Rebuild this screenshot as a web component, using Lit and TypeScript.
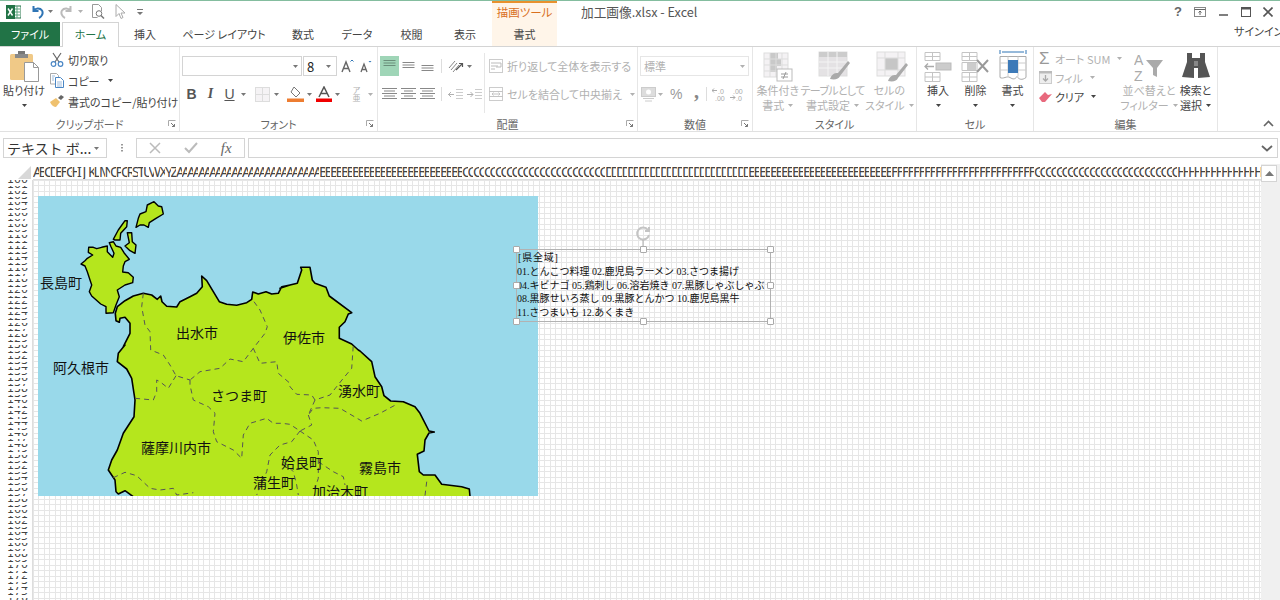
import { LitElement, html, css, svg } from 'lit';
import { customElement } from 'lit/decorators.js';

// map outlines were traced from crops, each crop has its own origin at 1/3 scale
const z = (ox: number, oy: number, pts: number[]) => {
  const out: string[] = [];
  for (let i = 0; i < pts.length; i += 2) {
    out.push(`${(ox + pts[i] / 3).toFixed(1)},${(oy + pts[i + 1] / 3).toFixed(1)}`);
  }
  return out;
};
const A = (p: number[]) => z(30, 190, p);
const B = (p: number[]) => z(280, 190, p);
const C = (p: number[]) => z(30, 345, p);
const D = (p: number[]) => z(280, 345, p);
const d = (...parts: string[][]) => 'M' + parts.flat().join(' L');

const mainland = d(
  A([258,392,256,370,262,350,285,332,310,318,340,310,365,315,382,328,392,318,396,335,410,349,440,351,450,335,480,320,500,310,517,290,515,258,530,272,550,305,568,335,590,343,620,346,650,338,665,328,668,306,685,312,708,305,725,312,745,310,755,290,780,285]),
  B([0,295,30,285,52,280,65,240,62,232,90,232,97,270,105,280,138,292,148,318,215,368,205,372,195,395,178,412,178,445,215,462,235,480]),
  D([240,18,275,50,285,95,305,125,312,152,332,168,370,170,405,185,420,205,447,258,463,261,447,264,435,285,432,318,412,328,418,380,430,390,465,390,485,418,545,425,568,432,570,453,570,480]),
  C([320,480,310,455,285,437,265,447,258,440,255,405,235,375,245,345,262,315,280,265,312,215,315,165,305,100,290,72,262,50,265,25,285,0]),
  A([280,470,300,430,300,400,285,382,270,385,268,397,258,392]),
) + ' Z';

const islands = [
  A([153,222,165,212,172,205,188,195,175,187,176,172,190,172,200,176,215,172,232,168,232,185,248,202,252,190,243,170,238,158,250,155,258,168,272,172,282,188,298,208,285,215,280,228,278,246,295,248,310,262,308,278,285,285,262,300,268,320,258,345,250,368,228,370,228,350,212,342,185,318,178,305,185,285,180,270,172,245,165,228]),
  A([250,148,265,120,285,92,292,92,290,110,272,130,270,150,255,150]),
  A([292,128,305,128,307,155,318,165,315,190,300,182,285,168,298,158]),
  A([318,112,325,85,330,72,348,65,352,45,372,35,385,48,395,50,400,72,378,85,358,98,355,112,342,105,330,105]),
].map((p) => d(p) + ' Z');

const borders = [
  d(A([340,310,335,350,345,405,360,425,362,480]), C([400,30,420,60,438,92,480,105])),
  d(C([438,92,415,130,390,110,380,105,380,140,370,165,315,160])),
  d(A([672,335,690,360,712,410,705,430,670,475]), C([640,50,600,42,570,70,510,80,480,105])),
  d(C([670,10,690,55,740,50,745,85,780,115]), D([30,125,50,148,95,150,105,165,150,150,190,100,215,70,220,0])),
  d(D([105,165,85,210,100,190,125,188,180,190,245,228,300,205,350,178])),
  d(D([85,210,95,240,60,258,30,238,5,235]), C([730,235,710,220,660,235,640,270,635,340,610,315,560,290,550,260,555,205,535,185,490,165,480,120,480,105])),
  d(D([60,258,100,285,115,320,115,400,105,430])),
  d(D([60,258,35,290,0,300]), C([720,330,710,380,680,450])),
  d(D([115,350,160,380,190,395,195,420])),
  d(D([10,350,40,380,50,420,55,450])),
  d(D([440,410,435,452])),
  d(C([250,398,285,382,320,392,360,430,390,435,430,430,440,450,490,443])),
];

const places: [string, number, number][] = [
  ['長島町', 40, 288], ['阿久根市', 53, 373], ['出水市', 176, 338], ['伊佐市', 283, 343],
  ['さつま町', 211, 401], ['湧水町', 338, 396], ['薩摩川内市', 141, 453], ['姶良町', 281, 468],
  ['霧島市', 359, 473], ['蒲生町', 253, 488], ['加治木町', 312, 497],
];

const letters = 'ABCDEFGHIJKLMNOPQRSTUVWXYZ';
const colName = (i: number) => (i < 26 ? letters[i] : letters[Math.floor(i / 26) - 1] + letters[i % 26]);

const caret = html`<svg width="5" height="3" viewBox="0 0 5 3"><path d="M0 0h5L2.5 3z" fill="currentColor"/></svg>`;

const lines = (y: number, ws: number[], c = '#777') => svg`${ws.map((w, i) => svg`<rect x="${(15 - w) / 2}" y="${y + i * 2.5}" width="${w}" height="1" fill="${c}"/>`)}`;
const align = (y: number, ws: number[], c = '#888') => html`<svg width="15" height="14" viewBox="0 0 15 14">${lines(y, ws, c)}</svg>`;

@customElement('app-root')
export class AppRoot extends LitElement {
  static styles = css`
    :host {
      display: block;
      width: 1280px;
      height: 600px;
      overflow: hidden;
      background: #fff;
      color: #444;
      font-family: 'Noto Sans CJK JP', 'Noto Sans', sans-serif;
      font-size: 11px;
      font-feature-settings: 'palt';
    }
    * { box-sizing: border-box; }
    svg { display: block; flex: none; }

    .app { display: flex; flex-direction: column; height: 600px; border-top: 1px solid #84bd9f; }

    .titlebar { display: flex; height: 21px; }
    .qat { width: 492px; display: flex; align-items: center; padding-left: 6px; color: #777; }
    .qat .gap { margin-left: 4px; }
    .undo { margin-left: 9px; }
    .redo { margin-left: 7px; }
    .preview { margin-left: 8px; }
    .pointer { margin-left: 10px; }
    .customize { margin-left: 11px; }
    .context-label {
      width: 65px;
      background: #fff5e9;
      border-top: 2px solid #e8912d;
      color: #d9701e;
      font-size: 11.5px;
      line-height: 19px;
      text-align: center;
    }
    .doc-title { margin-left: 24px; font-size: 12.7px; line-height: 22px; color: #555; font-feature-settings: normal; }
    .win { margin-left: auto; display: flex; align-items: center; padding-right: 1px; }
    .win .b { width: 22px; display: flex; justify-content: center; }
    .win .pin { margin-right: 2px; }
    .help { font: 700 13px 'Liberation Sans', sans-serif; color: #666; }

    .tabs { display: flex; height: 24px; position: relative; z-index: 1; }
    .tab { text-align: center; line-height: 24px; color: #444; }
    .tab.file { width: 60px; background: #217346; color: #fff; margin-right: 2px; }
    .tab.home { width: 57px; height: 25px; background: #fff; color: #217346; border: 1px solid #d4d4d4; border-bottom: none; line-height: 22px; }
    .tab.w52 { width: 52px; }
    .tab.w54 { width: 54px; }
    .tab.w56 { width: 56px; }
    .tab.w53 { width: 53px; }
    .tab.w106 { width: 106px; }
    .tab.ctx { width: 65px; background: #fff5e9; }
    .signin { margin-left: auto; line-height: 18px; white-space: nowrap; width: 46px; overflow: hidden; }

    .ribbon { display: flex; height: 86px; border-top: 1px solid #d4d4d4; border-bottom: 1px solid #e1e1e1; }
    .group { display: flex; flex-direction: column; border-right: 1px solid #e6e6e6; height: 84px; }
    .body { height: 66px; display: flex; }
    .label { display: grid; grid-template-columns: 1fr auto 1fr; align-items: center; height: 18px; padding-top: 3px; color: #666; }
    .launcher { grid-column: 3; justify-self: end; margin-right: 3px; }
    .label span { grid-column: 2; white-space: nowrap; }
    .g1 { width: 180px; }
    .g2 { width: 198px; }
    .g3 { width: 260px; }
    .g4 { width: 115px; }
    .g5 { width: 164px; }
    .g6 { width: 117px; }
    .g7 { width: 184px; }
    .collapse { flex: 1; display: flex; justify-content: flex-end; align-items: flex-end; padding: 0 6px 4px 0; }

    .big { display: flex; flex-direction: column; align-items: center; padding-top: 3px; white-space: nowrap; line-height: 15px; }
    .big .ico { height: 33px; display: flex; align-items: center; justify-content: center; }
    .big .car { height: 15px; display: flex; align-items: center; gap: 4px; }
    .w48 { width: 48px; }
    .w50 { width: 50px; }
    .w60 { width: 60px; }
    .w54b { width: 54px; }
    .w38 { width: 38px; }
    .w37 { width: 37px; }
    .w44 { width: 44px; }
    .off { color: #b1b1b1; }
    .squeeze { letter-spacing: -0.7px; }
    .nudge4 { margin-left: 6px; }
    .nudge3 { margin-left: 3px; }
    .cells-body { padding-left: 2px; }
    .edit-body { padding-left: 5px; }

    .stack { display: flex; flex-direction: column; padding: 2px 0 0 2px; }
    .item { display: flex; align-items: center; gap: 4px; height: 21px; white-space: nowrap; }
    .stack.tight { padding: 2px 0 0 0; width: 87px; }
    .stack.tight .item { height: 19px; gap: 3px; }
    .item .car { margin-left: 4px; display: flex; }
    .item.on { color: #444; }
    .sigma { font: 17px/17px 'Liberation Sans', sans-serif; color: #999; width: 13px; }

    .rows { display: flex; flex-direction: column; gap: 8px; padding-top: 9px; }
    .row { display: flex; align-items: center; height: 20px; }
    .row.txt { gap: 4px; white-space: nowrap; }
    .c { width: 19px; height: 20px; display: flex; align-items: center; justify-content: center; }
    .c.w17 { width: 17px; }
    .k { width: 9px; display: flex; justify-content: center; color: #777; }
    .k.off { color: #b1b1b1; }
    .ml5 { margin-left: 5px; }
    .ml4 { margin-left: 4px; }
    .ml2 { margin-left: 2px; }
    .pl2 { padding-left: 2px; }
    .pl3 { padding-left: 3px; }
    .sep { width: 1px; height: 14px; background: #ddd; }
    .vsep { width: 1px; height: 60px; background: #e6e6e6; margin: 6px 4px 0 0; }
    .active { background: #9fd5b7; }
    .bold { font: 700 14px 'Liberation Sans', sans-serif; color: #555; }
    .ital { font: italic 700 14px 'Liberation Serif', serif; color: #555; }
    .under { font: 400 14px 'Liberation Sans', sans-serif; color: #555; text-decoration: underline; }
    .phonetic { display: block; font-size: 8px; line-height: 8px; text-align: center; padding-top: 2px; }
    .pct { margin-left: 5px; font: 14px 'Liberation Sans', sans-serif; width: 18px; color: #999; }
    .comma { margin-left: 6px; font: 700 20px/10px 'Liberation Serif', serif; width: 10px; height: 16px; color: #888; }
    .caret-gap { display: flex; margin-left: 4px; }

    .field { height: 20px; border: 1px solid #d4d4d4; background: #fff; display: flex; align-items: center; justify-content: space-between; padding: 0 3px; color: #777; }
    .fontname { width: 120px; justify-content: flex-end; }
    .fontsize { width: 34px; margin-left: 1px; color: #222; font-size: 13px; }
    .numfmt { width: 109px; margin-left: 2px; border-color: #e6e6e6; color: #b1b1b1; }

    .fbar { display: flex; align-items: center; height: 20px; margin-top: 6px; padding-left: 3px; }
    .namebox { width: 104px; height: 20px; border: 1px solid #d4d4d4; display: flex; align-items: center; justify-content: space-between; padding: 0 7px 0 3px; font-size: 14px; color: #333; white-space: nowrap; font-feature-settings: normal; }
    .namebox .car { color: #777; display: flex; }
    .dots { width: 29px; display: flex; justify-content: center; }
    .fxbox { width: 109px; height: 20px; border: 1px solid #d4d4d4; display: flex; align-items: center; }
    .fxbox .c3 { width: 36px; display: flex; justify-content: center; }
    .fx { font: italic 15px 'Liberation Serif', serif; color: #666; }
    .finput { margin-left: 3px; width: 1030px; height: 20px; border: 1px solid #d4d4d4; display: flex; align-items: center; justify-content: flex-end; padding-right: 4px; }

    .sheet { flex: 1; min-height: 0; margin-top: 6px; display: grid; grid-template-columns: 33px 1228px 19px; grid-template-rows: 16px 1fr; }
    .corner { display: flex; justify-content: flex-end; align-items: flex-end; padding: 0 2px 1px 0; }
    .colhead { display: flex; overflow: hidden; border-bottom: 1px solid #ddd; }
    .colhead div { flex: none; width: 5.5px; height: 15px; overflow: hidden; font: 14px/15px 'Noto Sans', sans-serif; font-feature-settings: normal; color: #444; white-space: nowrap; }
    .rowhead { overflow: hidden; border-right: 1px solid #ddd; }
    .rowhead div { height: 5.5px; overflow: hidden; display: flex; align-items: flex-end; justify-content: flex-end; padding-right: 4px; font: 11px/12px 'DejaVu Sans', sans-serif; font-feature-settings: normal; color: #444; }
    .grid {
      position: relative;
      overflow: hidden;
      background-image:
        linear-gradient(to right, #e6e6e6 1px, transparent 1px, transparent 5px, #e6e6e6 5px, #e6e6e6 6px, transparent 6px),
        linear-gradient(to bottom, #e6e6e6 1px, transparent 1px, transparent 5px, #e6e6e6 5px, #e6e6e6 6px, transparent 6px);
      background-size: 11px 11px;
    }
    .scroll { grid-row: 1 / 3; grid-column: 3; background: #f0f0f0; padding: 1px 3px 0 0; }
    .scroll .up { height: 17px; background: #fff; border: 1px solid #d4d4d4; display: flex; align-items: center; justify-content: center; }

    .map { position: absolute; left: 5px; top: 16px; }
    .map text { font: 14px 'Noto Sans CJK JP', sans-serif; fill: #111; }

    .textbox {
      position: absolute;
      left: 483px;
      top: 69px;
      width: 255px;
      height: 73px;
      border: 1px solid #b2b2b2;
      padding-top: 1px;
      font: 10px/13.8px 'Liberation Serif', 'Noto Sans CJK JP', serif;
      font-feature-settings: normal;
      color: #111;
      white-space: nowrap;
    }
    .hd { letter-spacing: 0.8px; padding-left: 1px; }
    .h { position: absolute; width: 7px; height: 7px; background: #fff; border: 1px solid #aaa; border-radius: 1px; }
    .tl { left: -4px; top: -4px; } .tc { left: 123px; top: -4px; } .tr { right: -4px; top: -4px; }
    .ml { left: -4px; top: 32px; } .mr { right: -4px; top: 32px; }
    .bl { left: -4px; bottom: -4px; } .bc { left: 123px; bottom: -4px; } .br { right: -4px; bottom: -4px; }
    .rot { position: absolute; left: 118px; top: -24px; }
  `;

  launcher() {
    return html`<svg class="launcher" width="8" height="8" viewBox="0 0 8 8"><path d="M.5 6V.5H7.5" fill="none" stroke="#aaa"/><path d="M3 3l3.5 3.5M6.5 4v2.5H4" fill="none" stroke="#777"/></svg>`;
  }

  titleBar() {
    return html`<div class="titlebar">
      <div class="qat">
        <svg width="15" height="14" viewBox="0 0 15 14"><rect x="7" y="1" width="8" height="12" fill="#fff" stroke="#217346"/><path d="M8 4h6M8 7h6M8 10h6M11 1v12" stroke="#5aa47e"/><rect y="0" width="9" height="14" fill="#217346"/><path d="M2 3.5l4.5 7M6.5 3.5l-4.5 7" stroke="#fff" stroke-width="1.4"/></svg>
        <svg class="undo" width="14" height="14" viewBox="0 0 14 14"><path d="M3.500 1v5H8.500M3.500 6C5 3 10 2.500 12 5.500C13.500 8 12 11.500 9 13" fill="none" stroke="#2f75b5" stroke-width="2"/></svg>
        <span class="gap">${caret}</span>
        <svg class="redo" width="14" height="14" viewBox="0 0 14 14"><path d="M10.500 1v5H5.500M10.500 6C9 3 4 2.500 2 5.500C.5 8 2 11.500 5 13" fill="none" stroke="#bbb" stroke-width="2"/></svg>
        <span class="gap off">${caret}</span>
        <svg class="preview" width="14" height="15" viewBox="0 0 14 15"><path d="M1.500.5h6l3 3V7M1.500.5v13h5" fill="none" stroke="#999"/><circle cx="8" cy="9.500" r="2.800" fill="none" stroke="#777"/><path d="M10 11.500l3 3" stroke="#777" stroke-width="1.500"/></svg>
        <svg class="pointer" width="11" height="15" viewBox="0 0 11 15"><path d="M1 .5v12l3-3 2 5 2-1-2-4.500h4z" fill="#fff" stroke="#aaa"/></svg>
        <svg class="customize" width="6" height="6" viewBox="0 0 6 6"><path d="M0 0h6v1H0zM0 3h6L3 6z" fill="#777"/></svg>
      </div>
      <div class="context-label">描画ツール</div>
      <div class="doc-title">加工画像.xlsx - Excel</div>
      <div class="win">
        <div class="b"><span class="help">?</span></div>
        <div class="b pin"><svg width="12" height="10" viewBox="0 0 12 10"><rect x=".5" y=".5" width="11" height="9" fill="none" stroke="#888"/><path d="M.5 2.500h11M6 8V4M4.500 5.500L6 4l1.500 1.500" fill="none" stroke="#666"/></svg></div>
        <div class="b"><svg width="10" height="10" viewBox="0 0 10 10"><path d="M0 8h9" stroke="#555" stroke-width="1.500"/></svg></div>
        <div class="b"><svg width="10" height="10" viewBox="0 0 10 10"><rect x=".5" y=".5" width="9" height="9" fill="none" stroke="#555"/><path d="M0 1.500h10" stroke="#555" stroke-width="2"/></svg></div>
        <div class="b"><svg width="10" height="10" viewBox="0 0 10 10"><path d="M.5.5l9 9M9.500.5l-9 9" stroke="#555" stroke-width="1.600"/></svg></div>
      </div>
    </div>`;
  }

  tabs() {
    return html`<div class="tabs">
      <div class="tab file">ファイル</div>
      <div class="tab home">ホーム</div>
      <div class="tab w52">挿入</div>
      <div class="tab w106">ページ レイアウト</div>
      <div class="tab w52">数式</div>
      <div class="tab w56">データ</div>
      <div class="tab w53">校閲</div>
      <div class="tab w54">表示</div>
      <div class="tab ctx">書式</div>
      <div class="signin">サインイン</div>
    </div>`;
  }

  clipboard() {
    return html`<div class="group g1">
      <div class="body">
        <div class="big w48">
          <div class="ico"><svg width="30" height="33" viewBox="0 0 30 33"><rect x="1" y="4" width="23" height="26" rx="1.500" fill="#f0c987"/><rect x="9" y="1" width="7" height="5" fill="#777"/><rect x="6" y="4" width="13" height="4" fill="#8a8a8a"/><path d="M15.500 12.500h9l5 5v14h-14z" fill="#fff" stroke="#999"/><path d="M24.500 12.500v5h5" fill="none" stroke="#999"/></svg></div>
          <span>貼り付け</span>
          <div class="car">${caret}</div>
        </div>
        <div class="stack">
          <div class="item">
            <svg width="14" height="15" viewBox="0 0 14 15"><path d="M3 1l6 9M11 1L5 10" stroke="#666" stroke-width="1.200"/><circle cx="3.500" cy="12" r="2.300" fill="#fff" stroke="#4a86c5" stroke-width="1.200"/><circle cx="10.500" cy="12" r="2.300" fill="#fff" stroke="#4a86c5" stroke-width="1.200"/></svg>
            <span>切り取り</span>
          </div>
          <div class="item">
            <svg width="14" height="15" viewBox="0 0 14 15"><path d="M.5.5h6l2 2V11H.5z" fill="#fff" stroke="#aaa"/><path d="M5.500 4.500h5l3 3v7h-8z" fill="#fff" stroke="#4a86c5"/><path d="M7 9h5M7 11h5M7 13h5M2 3h3M2 5h2M2 7h2" stroke="#9dbbdc"/></svg>
            <span>コピー</span><span class="car">${caret}</span>
          </div>
          <div class="item">
            <svg width="14" height="13" viewBox="0 0 14 13"><path d="M0 7l6-4 4 4-4 5c-2 0-5-2-6-5z" fill="#efc16f"/><path d="M8 3l3-3 3 2-3 3z" fill="#666"/></svg>
            <span>書式のコピー/貼り付け</span>
          </div>
        </div>
      </div>
      <div class="label"><span>クリップボード</span>${this.launcher()}</div>
    </div>`;
  }

  font() {
    return html`<div class="group g2">
      <div class="body">
        <div class="rows pl2">
          <div class="row">
            <div class="field fontname">${caret}</div>
            <div class="field fontsize"><span>8</span><span class="k">${caret}</span></div>
            <div class="c w17 ml2"><svg width="13" height="14" viewBox="0 0 13 14"><path d="M1 13L5 3l4 10M2.500 9.500h5" fill="none" stroke="#666" stroke-width="1.400"/><path d="M9.500 2.500L11 1l1.500 1.500" fill="none" stroke="#2f75b5"/></svg></div>
            <div class="c"><svg width="13" height="14" viewBox="0 0 13 14"><path d="M2 13L5 5l3 8M3 10.500h4" fill="none" stroke="#666" stroke-width="1.300"/><path d="M9.500 2h3l-1.500 1.500z" fill="#2f75b5"/></svg></div>
          </div>
          <div class="row">
            <div class="c bold">B</div>
            <div class="c ital">I</div>
            <div class="c under">U</div>
            <div class="k">${caret}</div>
            <div class="c ml5"><svg width="15" height="15" viewBox="0 0 15 15"><rect x=".5" y=".5" width="14" height="14" fill="#f5f3f5" stroke="#ddd"/><path d="M7.500 0v15M0 7.500h15" stroke="#ddd"/></svg></div>
            <div class="k">${caret}</div>
            <div class="c ml5"><svg width="17" height="16" viewBox="0 0 17 16"><path d="M7 1l6 6-4 4-5-5z" fill="#fff" stroke="#777"/><rect x="0" y="12.500" width="17" height="3.500" fill="#ed7d31"/></svg></div>
            <div class="k">${caret}</div>
            <div class="c"><svg width="16" height="16" viewBox="0 0 16 16"><path d="M3 11L8 1l5 10M5 7.500h6" fill="none" stroke="#555" stroke-width="1.500"/><rect y="12.500" width="16" height="3.500" fill="#f00000"/></svg></div>
            <div class="k">${caret}</div>
            <div class="c ml5 off phonetic">ア<br />亜</div>
            <div class="k off">${caret}</div>
          </div>
        </div>
      </div>
      <div class="label"><span>フォント</span>${this.launcher()}</div>
    </div>`;
  }

  alignment() {
    return html`<div class="group g3">
      <div class="body">
        <div class="rows pl2">
          <div class="row">
            <div class="c active">${align(1, [12, 12, 12], '#6b8f7b')}</div>
            <div class="c">${align(3, [12, 12, 12])}</div>
            <div class="c">${align(6, [12, 12, 12])}</div>
            <div class="sep ml4"></div>
            <div class="c ml4"><svg width="16" height="14" viewBox="0 0 16 14"><path d="M1 9l6-7M3 11l6-7M5 13l6-7" stroke="#888"/><path d="M8 11l6-6M11 4.500h3.500V8" fill="none" stroke="#555" stroke-width="1.200"/></svg></div>
            <div class="k">${caret}</div>
          </div>
          <div class="row">
            <div class="c">${align(1, [15, 11, 15, 11, 15])}</div>
            <div class="c">${align(1, [15, 9, 15, 9, 15])}</div>
            <div class="c">${align(1, [15, 11, 15, 11, 15])}</div>
            <div class="sep ml4"></div>
            <div class="c ml4"><svg width="15" height="11" viewBox="0 0 15 11"><path d="M0 5.500h6M3 3L.5 5.500 3 8" fill="none" stroke="#b1b1b1"/><path d="M8 .5h7M8 3.500h7M8 6.500h7M8 9.500h7" stroke="#ccc"/></svg></div>
            <div class="c"><svg width="15" height="11" viewBox="0 0 15 11"><path d="M0 5.500h6M3.500 3L6 5.500 3.500 8" fill="none" stroke="#b1b1b1"/><path d="M8 .5h7M8 3.500h7M8 6.500h7M8 9.500h7" stroke="#ccc"/></svg></div>
          </div>
        </div>
        <div class="vsep"></div>
        <div class="rows off">
          <div class="row txt">
            <svg width="14" height="14" viewBox="0 0 14 14"><rect x=".5" y=".5" width="13" height="13" fill="#fff" stroke="#ccc"/><path d="M2 4h10M2 7h7M2 10h4M12 4v4H7" fill="none" stroke="#bbb"/></svg>
            <span>折り返して全体を表示する</span>
          </div>
          <div class="row txt">
            <svg width="14" height="14" viewBox="0 0 14 14"><rect x=".5" y=".5" width="13" height="13" fill="#fff" stroke="#ccc"/><path d="M0 4.500h14M0 9.500h14M3 7h8M4.500 5.500L3 7l1.500 1.500M9.500 5.500L11 7 9.500 8.500" fill="none" stroke="#c4c4c4"/></svg>
            <span>セルを結合して中央揃え</span>
            <span class="caret-gap">${caret}</span>
          </div>
        </div>
      </div>
      <div class="label"><span>配置</span>${this.launcher()}</div>
    </div>`;
  }

  number() {
    return html`<div class="group g4">
      <div class="body">
        <div class="rows">
          <div class="row"><div class="field numfmt"><span>標準</span>${caret}</div></div>
          <div class="row off pl3">
            <svg width="15" height="15" viewBox="0 0 15 15"><rect x=".5" y=".5" width="14" height="9" fill="#ddd" stroke="#ccc"/><circle cx="7.500" cy="5" r="2.500" fill="#fff"/><path d="M2 11.500h11M4 14h7" stroke="#ccc"/></svg>
            <div class="k off">${caret}</div>
            <span class="pct">%</span>
            <span class="comma">,</span>
            <div class="sep ml2"></div>
            <svg class="ml5" width="14" height="14" viewBox="0 0 14 14"><path d="M0 3.500h5M2 1.500l-2 2 2 2" fill="none" stroke="#aaa"/><text x="6" y="6.500" font-size="7" fill="#aaa" font-family="Liberation Sans">.0</text><text x="3" y="13.500" font-size="7" fill="#aaa" font-family="Liberation Sans">.00</text></svg>
            <svg class="ml4" width="15" height="14" viewBox="0 0 15 14"><text x="3" y="6.500" font-size="7" fill="#aaa" font-family="Liberation Sans">.00</text><path d="M0 10.500h5M3 8.500l2 2-2 2" fill="none" stroke="#aaa"/><text x="6" y="13.500" font-size="7" fill="#aaa" font-family="Liberation Sans">.0</text></svg>
          </div>
        </div>
      </div>
      <div class="label"><span>数値</span>${this.launcher()}</div>
    </div>`;
  }

  styles_() {
    return html`<div class="group g5">
      <div class="body off">
        <div class="big w50">
          <div class="ico"><svg width="30" height="30" viewBox="0 0 30 30"><rect x="1" y="1" width="24" height="24" fill="#f4f2f4" stroke="#ddd"/><path d="M7 1h8v6h3v7h-4v6H7z" fill="#c9c9c9"/><path d="M1 7h24M1 13h24M1 19h24M7 1v24M13 1v24M19 1v24" stroke="#ddd"/><rect x="14" y="17" width="15" height="12" fill="#fff" stroke="#bbb"/><path d="M18 22h7M18 25h7M23 20l-3 7" stroke="#999"/></svg></div>
          <span>条件付き</span>
          <div class="car">書式 ${caret}</div>
        </div>
        <div class="big w60">
          <div class="ico"><svg class="nudge3" width="32" height="32" viewBox="0 0 32 32"><rect x="1" y="1" width="28" height="24" fill="#e4e2e4" stroke="#ddd"/><path d="M1 1h28v5H1z" fill="#ccc"/><path d="M1 11h28M1 17h28M10 1v24M19 1v24" stroke="#f4f4f4"/><path d="M12 28c2-5 4-6 8-6l10-12 2 2-10 13c-1 3-5 4-10 3z" fill="#aaa"/></svg></div>
          <span class="squeeze">テーブルとして</span>
          <div class="car">書式設定 ${caret}</div>
        </div>
        <div class="big w54b">
          <div class="ico"><svg class="nudge4" width="32" height="32" viewBox="0 0 32 32"><rect x="1" y="1" width="28" height="24" fill="#f4f2f4" stroke="#ddd"/><rect x="9" y="7" width="13" height="12" fill="#c6c6c6"/><path d="M1 7h28M1 19h28M9 1v24M22 1v24" stroke="#ddd"/><path d="M12 30c2-5 4-6 8-6l10-12 2 2-10 13c-1 3-5 4-10 3z" fill="#aaa"/></svg></div>
          <span>セルの</span>
          <div class="car">スタイル ${caret}</div>
        </div>
      </div>
      <div class="label"><span>スタイル</span></div>
    </div>`;
  }

  cells() {
    return html`<div class="group g6">
      <div class="body cells-body">
        <div class="big w38">
          <div class="ico"><svg width="28" height="30" viewBox="0 0 28 30"><path d="M1 .5h15v8H1zM1 4.500h15M8.500.5v8M1 20.500h15v9H1zM1 25h15M8.500 20.500v9" fill="none" stroke="#c4c4c4"/><rect x="12" y="11" width="15" height="7" fill="#ccc" stroke="#bbb"/><path d="M10 14.500H1M4 11.500l-3 3 3 3" fill="none" stroke="#aaa" stroke-width="1.300"/></svg></div>
          <span>挿入</span><div class="car">${caret}</div>
        </div>
        <div class="big w37">
          <div class="ico"><svg width="30" height="30" viewBox="0 0 30 30"><path d="M1 .5h15v8H1zM1 4.500h15M8.500.5v8M1 20.500h15v9H1zM1 25h15M8.500 20.500v9M1 10.500h15v8H1z" fill="none" stroke="#c4c4c4"/><rect x="6" y="11" width="9" height="7" fill="#ccc"/><path d="M16 8l11 12M27 8L16 20" stroke="#999" stroke-width="2"/></svg></div>
          <span>削除</span><div class="car">${caret}</div>
        </div>
        <div class="big w37">
          <div class="ico"><svg width="28" height="33" viewBox="0 0 28 33"><path d="M1 0v4M27 0v4M3 2h22" stroke="#2f75b5"/><path d="M1 6.500h26v21c-4 3-7 2-9-1-2 3-4 3-7 1s-7 2-10 0z" fill="#fff" stroke="#aaa"/><path d="M1 13h26M1 20h26M9 6.500v20M19 6.500v20" stroke="#ccc"/><rect x="9" y="10" width="10" height="13" fill="#3d7ab8"/></svg></div>
          <span>書式</span><div class="car">${caret}</div>
        </div>
      </div>
      <div class="label"><span>セル</span></div>
    </div>`;
  }

  editing() {
    return html`<div class="group g7">
      <div class="body edit-body">
        <div class="stack tight off">
          <div class="item">
            <span class="sigma">Σ</span>
            <span>オート SUM</span><span class="car">${caret}</span>
          </div>
          <div class="item">
            <svg width="13" height="13" viewBox="0 0 13 13"><rect x=".5" y=".5" width="12" height="12" fill="#eee" stroke="#ccc"/><rect width="13" height="2.500" fill="#bbb"/><path d="M6.500 4v6M4 7.500L6.500 10 9 7.500" fill="none" stroke="#aaa" stroke-width="1.300"/></svg>
            <span>フィル</span><span class="car">${caret}</span>
          </div>
          <div class="item on">
            <svg width="13" height="11" viewBox="0 0 13 11"><path d="M0 7l6-6 3 3 4-1-7 8H3z" fill="#e8697d"/></svg>
            <span>クリア</span><span class="car">${caret}</span>
          </div>
        </div>
        <div class="big w50 off">
          <div class="ico"><svg width="30" height="30" viewBox="0 0 30 30"><text x="0" y="13" font-size="14" fill="#aaa" font-family="Liberation Sans">A</text><text x="0" y="29" font-size="14" fill="#aaa" font-family="Liberation Sans">Z</text><path d="M12 8h17l-6 8v9l-4-2v-7z" fill="#aaa"/></svg></div>
          <span>並べ替えと</span>
          <div class="car">フィルター ${caret}</div>
        </div>
        <div class="big w44">
          <div class="ico"><svg width="28" height="27" viewBox="0 0 28 27"><path d="M5 0h5v5h8V0h5v9l5 15-12 1V15h-4v10L0 24 5 9z" fill="#555"/><path d="M12 8h4v5h-4z" fill="#888"/></svg></div>
          <span>検索と</span>
          <div class="car">選択 ${caret}</div>
        </div>
      </div>
      <div class="label"><span>編集</span></div>
    </div>`;
  }

  formulaBar() {
    return html`<div class="fbar">
      <div class="namebox">テキスト ボ...<span class="car">${caret}</span></div>
      <div class="dots"><svg width="2" height="8" viewBox="0 0 2 8"><path d="M0 0h2v1.500H0zM0 3h2v1.500H0zM0 6h2v1.500H0z" fill="#999"/></svg></div>
      <div class="fxbox">
        <div class="c3"><svg width="12" height="12" viewBox="0 0 12 12"><path d="M1 1l10 10M11 1L1 11" stroke="#bbb" stroke-width="1.500"/></svg></div>
        <div class="c3"><svg width="14" height="12" viewBox="0 0 14 12"><path d="M1 6l4 4 8-9" fill="none" stroke="#bbb" stroke-width="2"/></svg></div>
        <div class="c3 fx">fx</div>
      </div>
      <div class="finput"><svg width="12" height="7" viewBox="0 0 12 7"><path d="M1 1l5 4.500L11 1" fill="none" stroke="#666" stroke-width="1.800"/></svg></div>
    </div>`;
  }

  map() {
    return html`<svg class="map" width="500" height="300" viewBox="38 196 500 300">
      <rect x="38" y="196" width="500" height="300" fill="#99d9ea"/>
      <path d="${mainland}" fill="#b5e61d" stroke="#000" stroke-width="1.600" stroke-linejoin="round"/>
      ${islands.map((p) => svg`<path d="${p}" fill="#b5e61d" stroke="#000" stroke-width="1.400" stroke-linejoin="round"/>`)}
      ${borders.map((p) => svg`<path d="${p}" fill="none" stroke="#555" stroke-width="1" stroke-dasharray="5 4"/>`)}
      ${places.map(([t, x, y]) => svg`<text x="${x}" y="${y}">${t}</text>`)}
    </svg>`;
  }

  textBox() {
    return html`<div class="textbox">
      <div class="hd">[県全域]</div>
      <div>01.とんこつ料理 02.鹿児島ラーメン 03.さつま揚げ</div>
      <div>04.キビナゴ 05.鶏刺し 06.溶岩焼き 07.黒豚しゃぶしゃぶ</div>
      <div>08.黒豚せいろ蒸し 09.黒豚とんかつ 10.鹿児島黒牛</div>
      <div>11.さつまいも 12.あくまき</div>
      <svg class="rot" width="16" height="23" viewBox="0 0 16 23"><path d="M13 4a6 6 0 1 0 1 5M14 1v4h-4" fill="none" stroke="#c4c4c4" stroke-width="2"/><path d="M8 14v9" stroke="#aaa"/></svg>
      ${['tl', 'tc', 'tr', 'ml', 'mr', 'bl', 'bc', 'br'].map((p) => html`<div class="h ${p}"></div>`)}
    </div>`;
  }

  render() {
    const cols = Array.from({ length: 224 }, (_, i) => colName(i));
    const rows = Array.from({ length: 78 }, (_, i) => 100 + i);
    return html`<div class="app">
      ${this.titleBar()}
      ${this.tabs()}
      <div class="ribbon">
        ${this.clipboard()}${this.font()}${this.alignment()}${this.number()}${this.styles_()}${this.cells()}${this.editing()}
        <div class="collapse"><svg width="11" height="7" viewBox="0 0 11 7"><path d="M1 6l4.500-4.500L10 6" fill="none" stroke="#666" stroke-width="1.600"/></svg></div>
      </div>
      ${this.formulaBar()}
      <div class="sheet">
        <div class="corner"><svg width="13" height="13" viewBox="0 0 13 13"><path d="M13 0v13H0z" fill="#d8d8d8"/></svg></div>
        <div class="colhead">${cols.map((c) => html`<div>${c}</div>`)}</div>
        <div class="rowhead">${rows.map((r) => html`<div>${r}</div>`)}</div>
        <div class="grid">${this.map()}${this.textBox()}</div>
        <div class="scroll"><div class="up"><svg width="9" height="5" viewBox="0 0 9 5"><path d="M0 5l4.500-5L9 5z" fill="#777"/></svg></div></div>
      </div>
    </div>`;
  }
}
